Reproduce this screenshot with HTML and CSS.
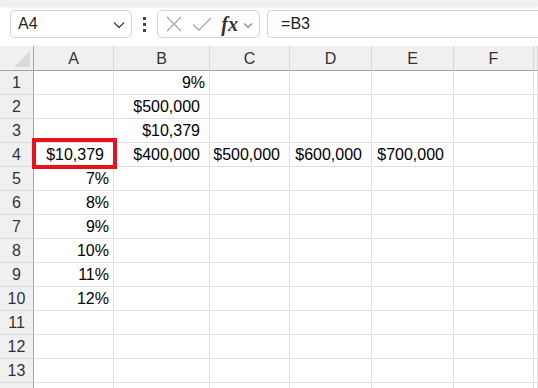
FILE: index.html
```html
<!DOCTYPE html>
<html>
<head>
<meta charset="utf-8">
<link rel="stylesheet" href="styles.css">
</head>
<body>
<div class="app">
  <div class="topband"></div>
  <div class="formula-row">
    <div class="namebox">
      <span class="name">A4</span>
      <svg class="chev" width="12" height="8" viewBox="0 0 12 8"><path d="M1 1.5 L6 6.5 L11 1.5" fill="none" stroke="#444" stroke-width="1.3"/></svg>
    </div>
    <div class="dots"><i></i><i></i><i></i></div>
    <div class="fxbox">
      <svg class="ico" width="18" height="18" viewBox="0 0 18 18"><path d="M2 2 L16 16 M16 2 L2 16" stroke="#a8a8a8" stroke-width="1.3" fill="none"/></svg>
      <svg class="ico" width="22" height="18" viewBox="0 0 22 18"><path d="M2 9.5 L8 15 L20 3" stroke="#a8a8a8" stroke-width="1.3" fill="none"/></svg>
      <span class="fx">fx</span>
      <svg class="chev2" width="10" height="7" viewBox="0 0 10 7"><path d="M1 1.5 L5 5.5 L9 1.5" fill="none" stroke="#888" stroke-width="1.2"/></svg>
    </div>
    <div class="formula">=B3</div>
  </div>
  <div class="sheet">
    <div class="grid">
      <div class="hd corner"><span class="tri"></span></div>
      <div class="hd">A</div><div class="hd">B</div><div class="hd">C</div><div class="hd">D</div><div class="hd">E</div><div class="hd">F</div><div class="hd"></div>

      <div class="rh">1</div><div class="c"></div><div class="c p">9%</div><div class="c"></div><div class="c"></div><div class="c"></div><div class="c"></div><div class="c"></div>
      <div class="rh">2</div><div class="c"></div><div class="c m">$500,000</div><div class="c"></div><div class="c"></div><div class="c"></div><div class="c"></div><div class="c"></div>
      <div class="rh">3</div><div class="c"></div><div class="c m">$10,379</div><div class="c"></div><div class="c"></div><div class="c"></div><div class="c"></div><div class="c"></div>
      <div class="rh">4</div><div class="c m">$10,379</div><div class="c m">$400,000</div><div class="c m">$500,000</div><div class="c m">$600,000</div><div class="c m">$700,000</div><div class="c"></div><div class="c"></div>
      <div class="rh">5</div><div class="c p">7%</div><div class="c"></div><div class="c"></div><div class="c"></div><div class="c"></div><div class="c"></div><div class="c"></div>
      <div class="rh">6</div><div class="c p">8%</div><div class="c"></div><div class="c"></div><div class="c"></div><div class="c"></div><div class="c"></div><div class="c"></div>
      <div class="rh">7</div><div class="c p">9%</div><div class="c"></div><div class="c"></div><div class="c"></div><div class="c"></div><div class="c"></div><div class="c"></div>
      <div class="rh">8</div><div class="c p">10%</div><div class="c"></div><div class="c"></div><div class="c"></div><div class="c"></div><div class="c"></div><div class="c"></div>
      <div class="rh">9</div><div class="c p">11%</div><div class="c"></div><div class="c"></div><div class="c"></div><div class="c"></div><div class="c"></div><div class="c"></div>
      <div class="rh">10</div><div class="c p">12%</div><div class="c"></div><div class="c"></div><div class="c"></div><div class="c"></div><div class="c"></div><div class="c"></div>
      <div class="rh">11</div><div class="c"></div><div class="c"></div><div class="c"></div><div class="c"></div><div class="c"></div><div class="c"></div><div class="c"></div>
      <div class="rh">12</div><div class="c"></div><div class="c"></div><div class="c"></div><div class="c"></div><div class="c"></div><div class="c"></div><div class="c"></div>
      <div class="rh">13</div><div class="c"></div><div class="c"></div><div class="c"></div><div class="c"></div><div class="c"></div><div class="c"></div><div class="c"></div>
      <div class="rh"></div><div class="c"></div><div class="c"></div><div class="c"></div><div class="c"></div><div class="c"></div><div class="c"></div><div class="c"></div>
    </div>
    <div class="sel"></div>
  </div>
</div>
</body>
</html>
```

FILE: styles.css
```css
html, body {
  margin: 0;
  padding: 0;
  background: #fff;
  overflow: hidden;
}
body {
  font-family: "Liberation Sans", Arial, sans-serif;
  width: 538px;
  height: 388px;
}
.app {
  width: 538px;
  height: 388px;
  overflow: hidden;
}
.topband {
  height: 6px;
  background: #f0f0f0;
  box-shadow: 0 1px 3px rgba(0,0,0,0.10);
}
.formula-row {
  height: 40px;
  box-sizing: border-box;
  padding: 4px 0 0 10px;
  display: flex;
  align-items: flex-start;
  white-space: nowrap;
}
.namebox {
  width: 126px;
  height: 28px;
  box-sizing: border-box;
  border: 1px solid #d4d4d4;
  border-radius: 5px;
  display: flex;
  align-items: center;
  justify-content: space-between;
  padding: 0 6px 0 7px;
  font-size: 16px;
  color: #222;
}
.chev { margin-top: 2px; }
.dots {
  width: 26px;
  height: 28px;
  display: flex;
  flex-direction: column;
  align-items: center;
  justify-content: center;
  gap: 3px;
}
.dots i {
  display: block;
  width: 3px;
  height: 3px;
  background: #444;
}
.fxbox {
  width: 106px;
  height: 28px;
  box-sizing: border-box;
  border: 1px solid #d4d4d4;
  border-radius: 5px;
  display: flex;
  align-items: center;
  padding-left: 7px;
}
.fxbox .ico { flex: none; }
.fxbox .ico + .ico { margin-left: 8px; }
.fx {
  font-family: "Liberation Serif", "DejaVu Serif", serif;
  font-style: italic;
  font-weight: bold;
  font-size: 20px;
  color: #333;
  margin-left: 8px;
  line-height: 1;
}
.chev2 { margin-left: 5px; margin-top: 2px; }
.formula {
  margin-left: 7px;
  width: 280px;
  height: 28px;
  box-sizing: border-box;
  border: 1px solid #d4d4d4;
  border-right: none;
  border-radius: 5px 0 0 5px;
  padding-left: 13px;
  font-size: 16px;
  line-height: 26px;
  color: #222;
}
.sheet {
  position: relative;
}
.grid {
  display: grid;
  grid-template-columns: 34px 80px 96px 80px 82px 82px 80px 1fr;
  grid-auto-rows: 24px;
  grid-template-rows: 25px;
}
.hd {
  background: #f0f0f0;
  border-right: 1px solid #d8d8d8;
  border-bottom: 1px solid #a6a6a6;
  box-sizing: border-box;
  text-align: center;
  font-size: 16px;
  color: #333;
  line-height: 23px;
  padding-top: 1px;
}
.corner {
  border-right: 1px solid #a6a6a6;
  position: relative;
}
.tri {
  position: absolute;
  left: 14px;
  top: 5px;
  width: 0;
  height: 0;
  border-left: 16px solid transparent;
  border-bottom: 16px solid #d9d9d9;
}
.rh {
  background: #f0f0f0;
  border-right: 1px solid #a6a6a6;
  border-bottom: 1px solid #d8d8d8;
  box-sizing: border-box;
  text-align: center;
  font-size: 16px;
  color: #333;
  line-height: 23px;
}
.c {
  border-right: 1px solid #e0e0e0;
  border-bottom: 1px solid #e0e0e0;
  box-sizing: border-box;
  font-size: 16px;
  color: #000;
  line-height: 23px;
  text-align: right;
  white-space: nowrap;
}
.c.m { padding-right: 9px; }
.c.p { padding-right: 4px; }
.sel {
  position: absolute;
  left: 32px;
  top: 92px;
  width: 85px;
  height: 31px;
  box-sizing: border-box;
  border: 4px solid #e5131d;
}
```
